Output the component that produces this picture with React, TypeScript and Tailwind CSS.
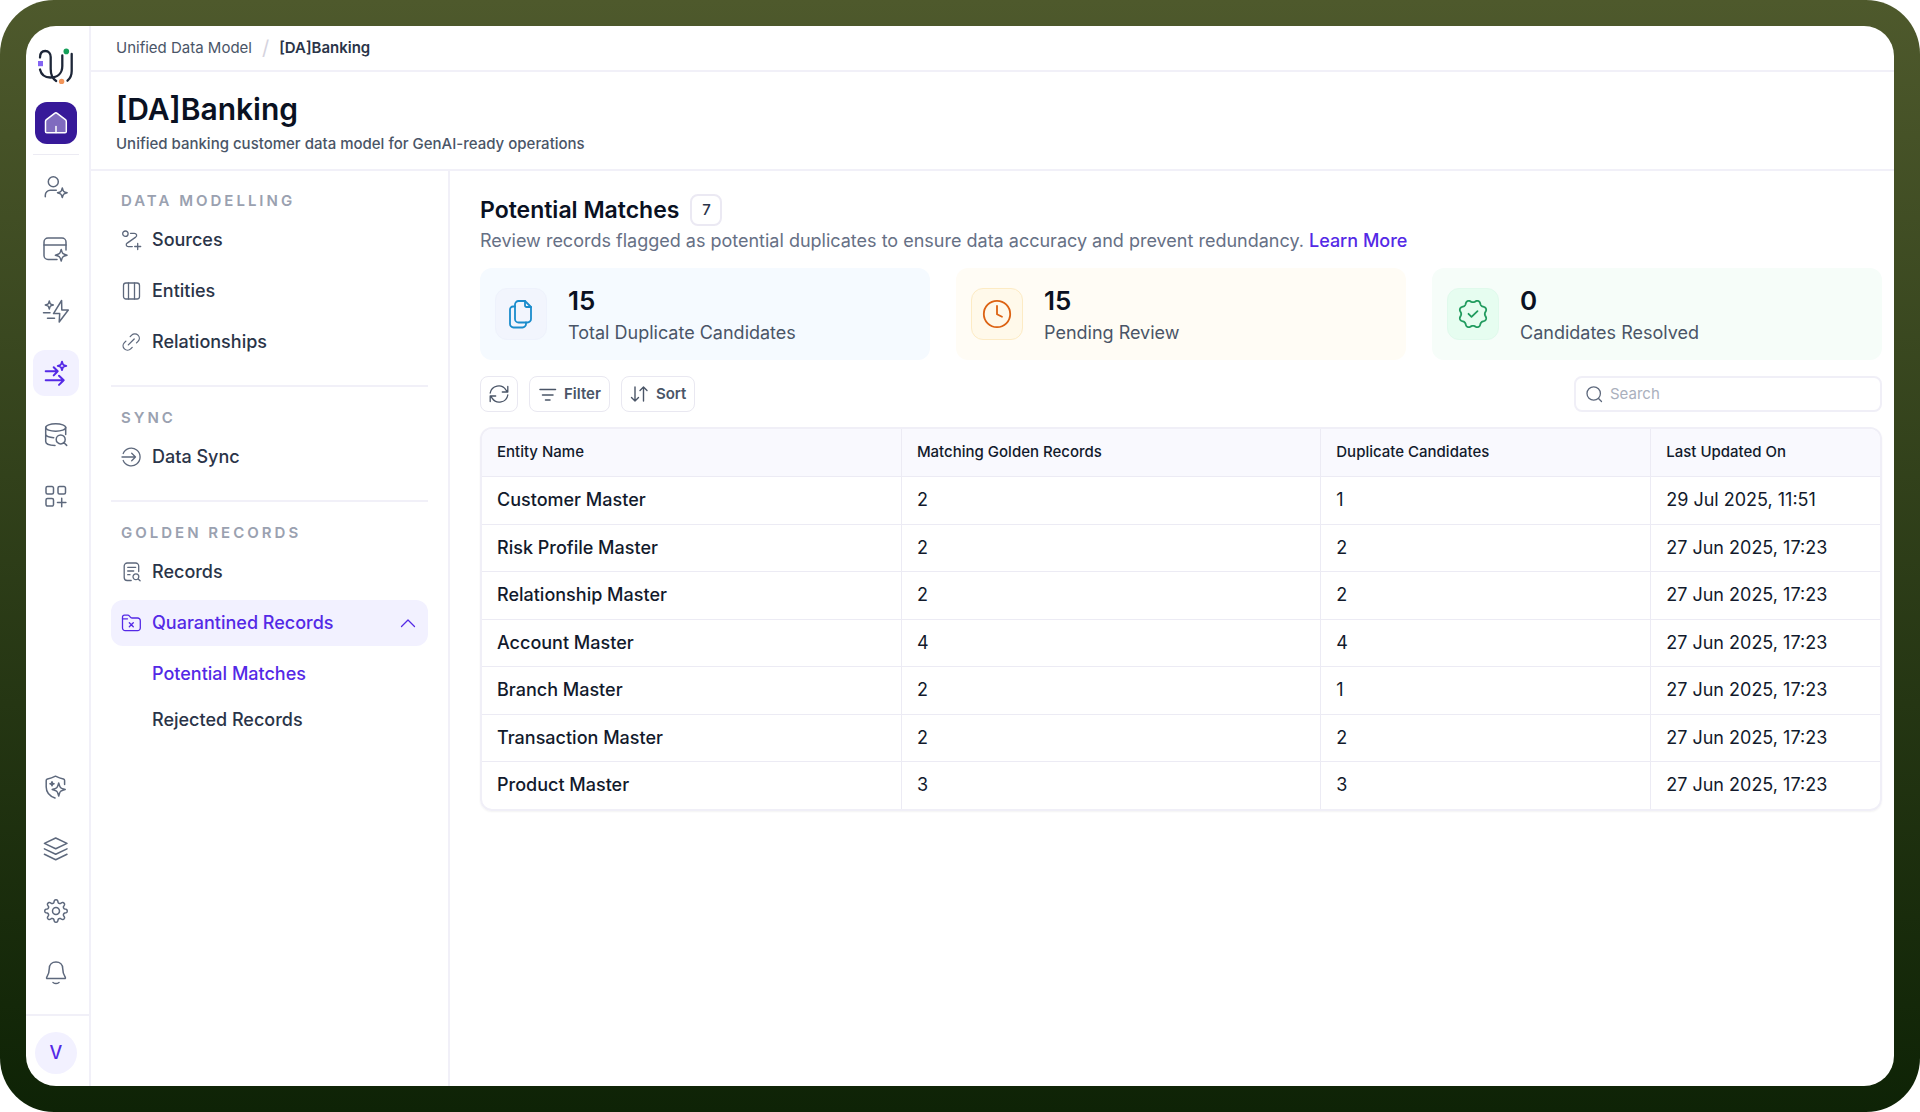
import React, { useState } from "react";

type IconProps = { className?: string };

const sparkle = (x: number, y: number, r: number) => {
  const k = r * 0.3;
  return `M${x} ${y - r}Q${x + k * 0.6} ${y - k * 1.2} ${x + k} ${y - k}Q${x + k * 1.2} ${y - k * 0.6} ${x + r} ${y}Q${x + k * 1.2} ${y + k * 0.6} ${x + k} ${y + k}Q${x + k * 0.6} ${y + k * 1.2} ${x} ${y + r}Q${x - k * 0.6} ${y + k * 1.2} ${x - k} ${y + k}Q${x - k * 1.2} ${y + k * 0.6} ${x - r} ${y}Q${x - k * 1.2} ${y - k * 0.6} ${x - k} ${y - k}Q${x - k * 0.6} ${y - k * 1.2} ${x} ${y - r}Z`;
};

// closed outline whose radius swings between teeth and valleys
const wave = (c: number, teeth: number, base: number, amp: number, sharp: number) => {
  const points: string[] = [];
  for (let i = 0; i < 192; i++) {
    const a = (i / 192) * Math.PI * 2;
    const r = base + (amp * Math.tanh(sharp * Math.cos(teeth * a))) / Math.tanh(sharp);
    points.push(`${(c + r * Math.cos(a)).toFixed(2)} ${(c + r * Math.sin(a)).toFixed(2)}`);
  }
  return `M${points.join("L")}Z`;
};

function Icon({
  d,
  size = 24,
  width = 1.5,
  className = "",
}: {
  d: string[];
  size?: number;
  width?: number;
  className?: string;
}) {
  return (
    <svg
      width={size}
      height={size}
      viewBox={`0 0 ${size} ${size}`}
      fill="none"
      stroke="currentColor"
      strokeWidth={width}
      strokeLinecap="round"
      strokeLinejoin="round"
      className={`shrink-0 overflow-visible ${className}`}
      aria-hidden="true"
    >
      {d.map((path) => (
        <path key={path} d={path} />
      ))}
    </svg>
  );
}

const railTop = [
  {
    name: "Profiles",
    d: [
      "M4.3 6.8a5 5 0 1 0 10 0a5 5 0 1 0-10 0",
      "M1.3 21.8v-1.5a5 5 0 0 1 5-5h6",
      sparkle(18.3, 17.8, 4.8),
    ],
  },
  {
    name: "Workspace",
    d: [
      "M22 13V5a4 4 0 0 0-4-4H4a4 4 0 0 0-4 4v13.5a4 4 0 0 0 4 4h9",
      "M0 8h22",
      sparkle(17.2, 18.2, 5.8),
    ],
  },
  {
    name: "Automations",
    d: [
      "M17.6 1.5L9.5 14.6h6.2L15.2 23L24.3 11h-6.5z",
      "M-.5 13.7h6.5M3.5 19.3h7",
      sparkle(5.3, 6, 4),
    ],
  },
  {
    name: "Data Models",
    active: true,
    d: [
      "M1.7 10.3h12M9.7 6.2l4 4.1l-4 4.1",
      "M1.7 19.3h18M15 14.7l4.7 4.6l-4.7 4.6",
      sparkle(18, 4.9, 4.2),
    ],
  },
  {
    name: "Data Explorer",
    d: [
      "M1.7 4.5a10 3.7 0 1 0 20 0a10 3.7 0 1 0-20 0",
      "M1.7 4.5v14c0 2.2 3.5 3.8 9.3 3.9M21.7 4.5v7M1.7 11.5c.5 1.6 3.5 2.9 8 3.2",
      "M12.2 16.4a4.5 4.5 0 1 0 9 0a4.5 4.5 0 1 0-9 0M20 19.7l2.7 2.7",
    ],
  },
  {
    name: "Apps",
    d: [
      "M3.5 1.6h4.5a1.5 1.5 0 0 1 1.5 1.5v4.5a1.5 1.5 0 0 1-1.5 1.5h-4.5a1.5 1.5 0 0 1-1.5-1.5v-4.5a1.5 1.5 0 0 1 1.5-1.5z",
      "M15.5 1.6h4.5a1.5 1.5 0 0 1 1.5 1.5v4.5a1.5 1.5 0 0 1-1.5 1.5h-4.5a1.5 1.5 0 0 1-1.5-1.5v-4.5a1.5 1.5 0 0 1 1.5-1.5z",
      "M3.5 13.6h4.5a1.5 1.5 0 0 1 1.5 1.5v4.5a1.5 1.5 0 0 1-1.5 1.5h-4.5a1.5 1.5 0 0 1-1.5-1.5v-4.5a1.5 1.5 0 0 1 1.5-1.5z",
      "M17.7 13.3v8.4M13.5 17.5h8.4",
    ],
  },
];

const railBottom = [
  {
    name: "Governance",
    d: [
      "M20.6 9.5V5.5c0-.8-.4-1.2-1.2-1.4C16.5 3.5 14 2.5 11.5 1.2C9 2.5 6.5 3.5 3.5 4.1c-.8.2-1.3.6-1.3 1.4v6.5c0 5 3.3 9 8.8 11",
      sparkle(14.7, 14.5, 6.5),
      sparkle(8, 8.7, 2),
    ],
  },
  {
    name: "Layers",
    d: [
      "M11.7 1L23 6.4L11.7 11.8L.4 6.4z",
      "M.4 11.9l11.3 5.4L23 11.9",
      "M.4 17.3l11.3 5.4L23 17.3",
    ],
  },
  {
    name: "Settings",
    d: [wave(12, 8, 9.7, 1.5, 1.6), "M8.5 12a3.5 3.5 0 1 0 7 0a3.5 3.5 0 1 0-7 0"],
  },
  {
    name: "Notifications",
    d: [
      "M12 1c-4 0-6.700 2.800-6.700 6.500c0 4.700-1.300 6.500-2.500 8.500c-.5.9-.3 1.600.7 1.600h17c1 0 1.200-.7.7-1.600c-1.200-2-2.500-3.800-2.500-8.500C18.700 3.800 16 1 12 1z",
      "M9 21.5c1.7 1.2 4.3 1.2 6 0",
    ],
  },
];

const sections = [
  {
    label: "DATA MODELLING",
    items: [
      {
        name: "Sources",
        d: [
          "M1.7 3.7a2.7 2.7 0 1 0 5.4 0a2.7 2.7 0 1 0-5.4 0",
          "M9.5 3.3h3.8c2.3 0 3.2 2.4 1.4 3.8l-8.5 6c-1.7 1.3-1 3.5 1.1 3.5h4",
          "M16.7 13.5v6M13.7 16.5h6",
        ],
      },
      {
        name: "Entities",
        d: [
          "M5 2h11a2.500 2.500 0 0 1 2.500 2.500v11a2.500 2.500 0 0 1-2.500 2.500h-11a2.500 2.500 0 0 1-2.500-2.500v-11a2.500 2.500 0 0 1 2.500-2.500z",
          "M7.5 2v16M13.5 2v16",
        ],
      },
      {
        name: "Relationships",
        d: [
          "M9.2 4.6l1.5-1.5a4.4 4.4 0 0 1 6.3 6.3l-1.5 1.5",
          "M11.2 15.4l-1.5 1.5a4.4 4.4 0 0 1-6.3-6.3l1.5-1.5",
          "M7.3 12.9l5.9-5.9",
        ],
      },
    ],
  },
  {
    label: "SYNC",
    items: [
      {
        name: "Data Sync",
        d: ["M2.2 6.5a8.8 8.8 0 1 1 0 7", "M1 10h13.5M10.7 6.2l3.8 3.8l-3.8 3.8"],
      },
    ],
  },
  {
    label: "GOLDEN RECORDS",
    items: [
      {
        name: "Records",
        d: [
          "M17.7 9.5V4a3 3 0 0 0-3-3H6.2a3 3 0 0 0-3 3v11.5a3 3 0 0 0 3 3h4",
          "M6.7 5.3h8M6.7 9h6M6.7 12.7h2.3",
          "M12 14.8a2.9 2.9 0 1 0 5.8 0a2.9 2.9 0 1 0-5.8 0M17.2 17l1.9 1.8",
        ],
      },
    ],
  },
];

const folder = [
  "M1.5 15V4a1.8 1.8 0 0 1 1.8-1.8h3.5c.8 0 1.2.3 1.7.9l1 1.2c.5.5.9.7 1.7.7h5.4a2.7 2.7 0 0 1 2.7 2.7V15a2.7 2.7 0 0 1-2.7 2.7H4.200A2.7 2.7 0 0 1 1.5 15z",
  "M1.5 5.8h5",
  "M8.3 9.8l4 4M12.3 9.8l-4 4",
];

const stats = [
  {
    value: "15",
    label: "Total Duplicate Candidates",
    card: "bg-[#f5faff]",
    box: "border-[#eef2fc] bg-[#f2f5fd] text-[#1a8ccc]",
    d: [
      "M11.5 1h6.5l6 6v12a3.5 3.5 0 0 1-3.5 3.5h-9A3.5 3.5 0 0 1 8 19V4.5A3.5 3.5 0 0 1 11.5 1z",
      "M18 1v4.5A1.5 1.5 0 0 0 19.5 7H24",
      "M8 6.5H6A3 3 0 0 0 3 9.5V24a3.5 3.5 0 0 0 3.5 3.5h9a3.5 3.5 0 0 0 3.5-3.5v-1.5",
    ],
  },
  {
    value: "15",
    label: "Pending Review",
    card: "bg-[#fffcf5]",
    box: "border-[#fdebc4] bg-[#fff9ea] text-[#dc6212]",
    d: ["M.8 14a13.2 13.2 0 1 0 26.4 0a13.2 13.2 0 1 0-26.4 0", "M14 6v8.2l5 2.5"],
  },
  {
    value: "0",
    label: "Candidates Resolved",
    card: "bg-[#f6fdf9]",
    box: "border-[#e0faec] bg-[#e6fdf0] text-[#219b5e]",
    // eight lobes, valleys on the axes
    d: [wave(14, 8, 12.9, -1.1, 0.8), "M9.5 13.8l3 3l6-5.7"],
  },
];

const rows = [
  ["Customer Master", "2", "1", "29 Jul 2025, 11:51"],
  ["Risk Profile Master", "2", "2", "27 Jun 2025, 17:23"],
  ["Relationship Master", "2", "2", "27 Jun 2025, 17:23"],
  ["Account Master", "4", "4", "27 Jun 2025, 17:23"],
  ["Branch Master", "2", "1", "27 Jun 2025, 17:23"],
  ["Transaction Master", "2", "2", "27 Jun 2025, 17:23"],
  ["Product Master", "3", "3", "27 Jun 2025, 17:23"],
];

function Logo({ className = "" }: IconProps) {
  return (
    <svg width="40" height="40" viewBox="0 0 40 40" fill="none" className={className} aria-hidden="true">
      <g stroke="#1d2638" strokeWidth="2.3" strokeLinecap="round">
        <path d="M4 9.500C4 5.500 6 3 9.300 3s5.400 2.500 5.400 6v12c0 6 1.500 9.500 5.500 12" />
        <path d="M4 21.500c1.200 5 5 8 10.300 8c7.500 0 12-4.500 12-11.500V7.500" />
        <path d="M35.700 6v17c0 4-1.300 7.300-4.200 9.700" />
      </g>
      <circle cx="30.3" cy="3.4" r="2.8" fill="#16a05a" />
      <rect x="2" y="13" width="5" height="5.2" fill="#8465f3" />
      <circle cx="25.6" cy="33.4" r="2.7" fill="#f2955a" />
    </svg>
  );
}

function Rail() {
  return (
    <nav className="flex w-[65px] shrink-0 flex-col border-r-2 border-[#f1f0f8]" aria-label="Main">
      <Logo className="mt-[22px] ml-2.5" />
      <a href="#home" aria-label="Home" className="mt-3.5 ml-[9px] flex h-[42px] w-[42px] items-center justify-center rounded-xl bg-[#371999]">
        <svg width="24" height="24" viewBox="0 0 24 24" fill="#806bbf" stroke="#fff" strokeWidth="1.5" strokeLinejoin="round" strokeLinecap="round" aria-hidden="true">
          <path d="M1.5 10.5c0-.8.3-1.300.9-1.800l8.200-6.400c.8-.6 1.800-.6 2.600 0l8.200 6.400c.6.5.9 1 .9 1.800v10c0 .8-.5 1.300-1.300 1.300H2.800c-.8 0-1.300-.5-1.300-1.300z" />
          <path d="M12 15.5v6" />
        </svg>
      </a>
      <div className="mt-2.5 ml-[7px] h-px w-[46px] bg-[#ecebf3]" />
      <div className="mt-[9px] flex flex-col gap-4 pl-[7px]">
        {railTop.map((item) => (
          <a
            key={item.name}
            href="#"
            aria-label={item.name}
            className={`flex h-[46px] w-[46px] items-center justify-center rounded-xl ${
              item.active ? "bg-[#f2f1ff] text-[#5429e6]" : "text-[#5d687c]"
            }`}
          >
            <Icon d={item.d} width={item.active ? 2 : 1.5} />
          </a>
        ))}
      </div>
      <div className="mt-auto flex flex-col gap-4 pl-[7px]">
        {railBottom.map((item) => (
          <a key={item.name} href="#" aria-label={item.name} className="flex h-[46px] w-[46px] items-center justify-center text-[#5d687c]">
            <Icon d={item.d} />
          </a>
        ))}
      </div>
      <div className="mt-[18px] border-t-2 border-[#f1f0f8] pt-4 pb-3 pl-[9px]">
        <button type="button" className="h-[42px] w-[42px] rounded-full bg-[#f2f1ff] text-lg font-medium text-[#5429e6]">
          V
        </button>
      </div>
    </nav>
  );
}

function SideNav() {
  const [open, setOpen] = useState(true);

  return (
    <aside className="w-[359px] shrink-0 border-r-2 border-[#f1f0f8] px-5 pt-[19px]">
      {sections.map((section, index) => (
        <div key={section.label} className={index > 0 ? "mt-5 border-t-2 border-[#f1f0f8] pt-5" : ""}>
          <h2 className="px-2.5 text-[15px] leading-[22px] font-semibold tracking-[3px] text-[#9aa1b0]">{section.label}</h2>
          <div className="mt-[5px] flex flex-col gap-[5px]">
            {section.items.map((item) => (
              <a key={item.name} href="#" className="flex h-[46px] items-center gap-[11px] rounded-xl px-2.5 text-lg font-medium text-[#2a3448]">
                <Icon d={item.d} size={20} width={1.3} className="text-[#5d687c]" />
                {item.name}
              </a>
            ))}
          </div>
        </div>
      ))}
      <button
        type="button"
        aria-expanded={open}
        onClick={() => setOpen(!open)}
        className="mt-[5px] flex h-[46px] w-full items-center gap-[11px] rounded-xl bg-[#f2f1ff] px-2.5 text-lg font-medium text-[#5429e6]"
      >
        <Icon d={folder} size={20} width={1.3} />
        Quarantined Records
        <Icon d={["M3.5 13.5l6.5-6.5l6.5 6.5"]} size={20} width={1.3} className="ml-auto" />
      </button>
      {open && (
        <div className="mt-[5px] flex flex-col pl-[41px] text-lg font-medium">
          <a href="#" className="flex h-[46px] items-center text-[#5429e6]">
            Potential Matches
          </a>
          <a href="#" className="flex h-[46px] items-center text-[#2a3448]">
            Rejected Records
          </a>
        </div>
      )}
    </aside>
  );
}

export default function App() {
  const [query, setQuery] = useState("");
  const visible = rows.filter((row) => row[0].toLowerCase().includes(query.toLowerCase()));

  return (
    <div className="flex min-h-screen rounded-[54px] bg-linear-to-b from-[#4e592c] to-[#0e2306] p-[26px] font-['Inter',sans-serif]">
      <div className="flex flex-1 overflow-hidden rounded-[30px] bg-white">
        <Rail />
        <div className="flex min-w-0 flex-1 flex-col">
          <div className="flex h-[46px] items-center gap-2.5 border-b-2 border-[#f1f0f8] pl-[25px] text-[15px] text-[#4a5567]">
            <a href="#">Unified Data Model</a>
            <span className="text-xl text-[#d5d3de]">/</span>
            <span className="font-semibold text-[#2a3448]">[DA]Banking</span>
          </div>
          <header className="border-b-2 border-[#f1f0f8] pt-4 pb-3 pl-[25px]">
            <h1 className="text-[30px] leading-[43px] font-semibold text-[#0a1122]">[DA]Banking</h1>
            <p className="text-[15px] leading-[26px] font-medium text-[#4a5567]">Unified banking customer data model for GenAI-ready operations</p>
          </header>
          <div className="flex flex-1">
            <SideNav />
            <main className="min-w-0 flex-1 pt-[23px] pr-3 pl-[30px]">
              <div className="flex items-center gap-[11px]">
                <h2 className="text-[23px] leading-8 font-semibold text-[#0a1122]">Potential Matches</h2>
                <span className="flex h-8 w-8 items-center justify-center rounded-lg border-2 border-[#ebe9f3] text-[15px] font-medium text-[#2a3448]">7</span>
              </div>
              <p className="text-lg leading-[30px] text-[#667085]">
                Review records flagged as potential duplicates to ensure data accuracy and prevent redundancy.{" "}
                <a href="#" className="font-medium text-[#5429e6]">
                  Learn More
                </a>
              </p>
              <div className="mt-3 grid grid-cols-3 gap-[26px]">
                {stats.map((stat) => (
                  <div key={stat.label} className={`flex h-[92px] items-center gap-[21px] rounded-xl pl-[15px] ${stat.card}`}>
                    <div className={`flex h-[52px] w-[52px] items-center justify-center rounded-xl border ${stat.box}`}>
                      <Icon d={stat.d} size={28} width={1.8} />
                    </div>
                    <div className="pt-1.5">
                      <div className="text-[26px] leading-8 font-semibold text-[#0a1122]">{stat.value}</div>
                      <div className="text-lg leading-8 text-[#4a5567]">{stat.label}</div>
                    </div>
                  </div>
                ))}
              </div>
              <div className="mt-4 flex items-center gap-[11px] text-[15px] font-semibold text-[#4a5567]">
                <button type="button" aria-label="Refresh" className="flex h-9 w-[38px] items-center justify-center rounded-lg border border-[#e9e8f1]">
                  <Icon
                    d={[
                      "M1.2 9a8.6 8.6 0 0 1 15.7-3.2l1.6 2.2M18.8 2.5V8H13.3",
                      "M18.8 11a8.6 8.6 0 0 1-15.7 3.2L1.5 12M1.2 17.5V12h5.5",
                    ]}
                    size={20}
                    width={1.3}
                  />
                </button>
                <button type="button" className="flex h-9 items-center gap-2 rounded-lg border border-[#e9e8f1] px-2">
                  <Icon d={["M2 4.5h15.5", "M4.5 10h10.5", "M7.5 15h4.5"]} size={18} />
                  Filter
                </button>
                <button type="button" className="flex h-9 items-center gap-2 rounded-lg border border-[#e9e8f1] px-2">
                  <Icon d={["M5 2v14M1.5 12.5l3.5 3.5l3.5-3.5", "M13.5 16V2M10 5.5l3.5-3.5l3.5 3.5"]} size={18} width={1.4} />
                  Sort
                </button>
                <label className="ml-auto flex h-9 w-[308px] items-center gap-2 rounded-lg border-2 border-[#f0eff7] pl-2.5 font-normal">
                  <Icon d={["M1 7.5a6.7 6.7 0 1 0 13.4 0a6.7 6.7 0 1 0-13.4 0M12.5 12.5l3 3"]} size={16} width={1.3} className="text-[#5d687c]" />
                  <input
                    type="text"
                    aria-label="Search"
                    placeholder="Search"
                    value={query}
                    onChange={(e) => setQuery(e.target.value)}
                    className="min-w-0 flex-1 outline-none placeholder:text-[#aab0bd]"
                  />
                </label>
              </div>
              <div className="mt-[15px] overflow-hidden rounded-xl border-2 border-[#f0eff7] shadow-xs">
                <table className="w-full table-fixed border-collapse text-left text-[#121a2c]">
                  <colgroup>
                    <col className="w-[30%]" />
                    <col className="w-[30%]" />
                    <col className="w-[23.6%]" />
                    <col />
                  </colgroup>
                  <thead className="bg-[#f9f9fe] text-[15px]">
                    <tr className="h-[47px]">
                      {["Entity Name", "Matching Golden Records", "Duplicate Candidates", "Last Updated On"].map((title) => (
                        <th key={title} scope="col" className="border-r border-[#ecebf4] pl-[15px] font-medium last:border-r-0">
                          {title}
                        </th>
                      ))}
                    </tr>
                  </thead>
                  <tbody className="text-lg">
                    {visible.map((row) => (
                      <tr key={row[0]} className="border-t border-[#ecebf4] odd:h-12 even:h-[47px]">
                        {row.map((cell, i) => (
                          <td key={i} className="border-r border-[#ecebf4] pl-[15px] first:font-medium last:border-r-0">
                            {cell}
                          </td>
                        ))}
                      </tr>
                    ))}
                  </tbody>
                </table>
              </div>
            </main>
          </div>
        </div>
      </div>
    </div>
  );
}
